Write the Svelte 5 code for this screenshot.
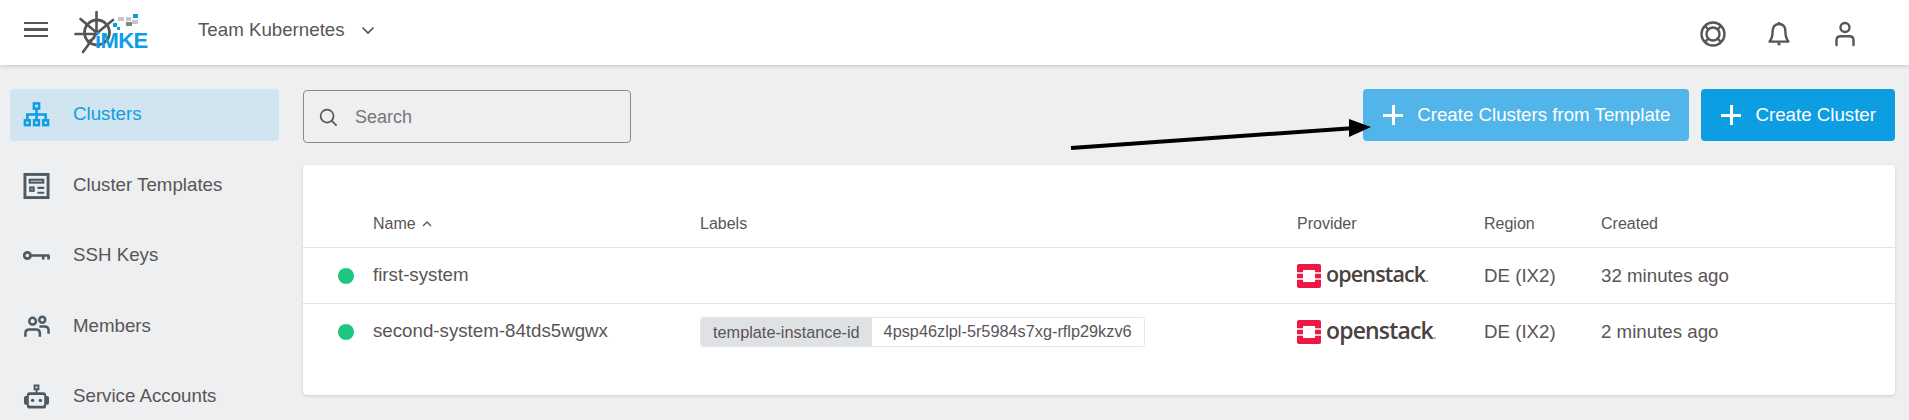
<script>
  const nav = [
    { id: 'clusters', label: 'Clusters', active: true },
    { id: 'templates', label: 'Cluster Templates' },
    { id: 'keys', label: 'SSH Keys' },
    { id: 'members', label: 'Members' },
    { id: 'accounts', label: 'Service Accounts' },
  ];
  const rows = [
    { name: 'first-system', region: 'DE (IX2)', created: '32 minutes ago', big: false },
    { name: 'second-system-84tds5wgwx', label: ['template-instance-id', '4psp46zlpl-5r5984s7xg-rflp29kzv6'], region: 'DE (IX2)', created: '2 minutes ago', big: true },
  ];
</script>

<div class="page">
  <header class="top">
    <button class="burger" aria-label="Menu"><span></span><span></span><span></span></button>
    <div class="logo">
      <svg width="74" height="44" viewBox="0 0 74 44" fill="none" stroke="#555" stroke-width="2.6" stroke-linecap="round">
        <circle cx="23" cy="22.500" r="12.500" stroke-width="2.800" />
        <path d="M22.500 2v20M1.500 24H23M6.500 9L23 23M39 10L23 23M23 23L9 42M14 32l6-4" />
        <rect x="39" y="13" width="4" height="4" fill="#0d9de3" stroke="none" />
        <rect x="44" y="7" width="6" height="4" fill="#c4c8cb" stroke="none" />
        <rect x="52" y="12" width="6" height="4" fill="#7f8487" stroke="none" />
        <rect x="52" y="7" width="5" height="4" fill="#c4c8cb" stroke="none" />
        <rect x="59" y="4" width="5" height="4" fill="#0d9de3" stroke="none" />
        <rect x="58" y="10" width="6" height="4" fill="#c4c8cb" stroke="none" />
        <rect x="43" y="17" width="3" height="3" fill="#0d9de3" stroke="none" />
      </svg>
      <span class="imke">iMKE</span>
    </div>
    <div class="team">
      <span>Team Kubernetes</span>
      <svg width="14" height="14" viewBox="0 0 14 14" fill="none" stroke="#5a5456" stroke-width="1.700"><path d="M1.500 4.500L7 10l5.500-5.500" /></svg>
    </div>
    <div class="actions">
      <svg width="28" height="28" viewBox="0 0 28 28" fill="none" stroke="#5a5456" stroke-width="2.400">
        <circle cx="14" cy="14" r="11.500" /><circle cx="14" cy="14" r="6.500" />
        <path d="M6 6l3.600 3.600M22 6l-3.600 3.600M6 22l3.600-3.600M22 22l-3.600-3.600" />
      </svg>
      <svg width="28" height="28" viewBox="0 0 28 28" fill="none" stroke="#5a5456" stroke-width="2.400" stroke-linejoin="round">
        <path d="M14 4c-4.600 0-6.400 3.600-6.400 7.600 0 5-1.400 8-3 10h18.800c-1.600-2-3-5-3-10C20.400 7.600 18.600 4 14 4z" />
        <path d="M14 2v2M12.500 24h3" />
      </svg>
      <svg width="28" height="28" viewBox="0 0 28 28" fill="none" stroke="#5a5456" stroke-width="2.400" stroke-linecap="round">
        <circle cx="14" cy="7.500" r="4.500" />
        <path d="M5.500 25v-5c0-2.500 1.500-3.800 4-3.800h9c2.500 0 4 1.300 4 3.800v5" />
      </svg>
    </div>
  </header>

  <div class="body">
    <nav class="side">
      {#each nav as item (item.id)}
        <div class="item" class:active={item.active}>
          <span class="ico">
            {#if item.id === 'clusters'}
              <svg width="28" height="28" viewBox="0 0 28 28" fill="none" stroke="currentColor" stroke-width="2.600">
                <rect x="11.300" y="2" width="5.400" height="5.400" /><rect x="2" y="19.500" width="5" height="5" /><rect x="11.500" y="19.500" width="5" height="5" /><rect x="21" y="19.500" width="5" height="5" />
                <path d="M14 7v12M4.500 19v-5.500h19V19" />
              </svg>
            {:else if item.id === 'templates'}
              <svg width="28" height="28" viewBox="0 0 28 28" fill="none" stroke="currentColor" stroke-width="3">
                <rect x="2" y="2" width="24" height="24" />
                <rect x="7" y="7.500" width="14" height="3" stroke-width="2.200" /><rect x="7.500" y="15.500" width="3.500" height="3.500" stroke-width="2.200" />
                <path d="M15 16h7M15 21h7" stroke-width="2.200" />
              </svg>
            {:else if item.id === 'keys'}
              <svg width="28" height="28" viewBox="0 0 28 28" fill="none" stroke="currentColor" stroke-width="2.800">
                <circle cx="4.500" cy="13.500" r="3.300" /><path d="M8 13.500h19.500M21 13.500v4M26.500 13.500v4" />
              </svg>
            {:else if item.id === 'members'}
              <svg width="28" height="28" viewBox="0 0 28 28" fill="none" stroke="currentColor" stroke-width="2.600">
                <circle cx="10" cy="8" r="3.500" /><circle cx="20" cy="6.500" r="3.100" />
                <path d="M2.500 24v-3.500c0-2.500 1.500-4 4-4h7c2.500 0 4 1.500 4 4V24M17 13.500h5.500c2.500 0 4 1.500 4 4V21" />
              </svg>
            {:else}
              <svg width="28" height="28" viewBox="0 0 28 28" fill="currentColor">
                <path d="M11 1h6v6h-2v2h6a3 3 0 013 3v1h1a2 2 0 012 2v5a2 2 0 01-2 2h-1v1a3 3 0 01-3 3H7a3 3 0 01-3-3v-1H3a2 2 0 01-2-2v-5a2 2 0 012-2h1v-1a3 3 0 013-3h6V7h-2zm2 2v2h2V3z" fill-rule="evenodd" />
                <rect x="6" y="12" width="16" height="11" rx="1.500" fill="#eeeff1" />
                <circle cx="10" cy="17.500" r="1.800" /><circle cx="18" cy="17.500" r="1.800" />
              </svg>
            {/if}
          </span>
          <span class="lbl">{item.label}</span>
        </div>
      {/each}
    </nav>

    <main class="main">
      <div class="bar">
        <label class="search">
          <svg width="19" height="19" viewBox="0 0 20 20" fill="none" stroke="#5a5456" stroke-width="1.800" stroke-linecap="round"><circle cx="8.500" cy="8.500" r="6.800" /><path d="M13.500 13.500L18 18" /></svg>
          <input placeholder="Search" />
        </label>
        <button class="btn light"><span class="plus"></span>Create Clusters from Template</button>
        <button class="btn"><span class="plus"></span>Create Cluster</button>
      </div>

      <section class="card">
        <div class="row head">
          <span></span>
          <span class="sort">Name
            <svg width="12" height="12" viewBox="0 0 12 12" fill="none" stroke="#5a5456" stroke-width="1.400"><path d="M2 8l4-4 4 4" /></svg>
          </span>
          <span>Labels</span><span>Provider</span><span>Region</span><span>Created</span>
        </div>
        {#each rows as r (r.name)}
          <div class="row data">
            <span class="dot"></span>
            <span class="name">{r.name}</span>
            <span>
              {#if r.label}
                <span class="tag"><span class="k">{r.label[0]}</span><span class="v">{r.label[1]}</span></span>
              {/if}
            </span>
            <span class="prov" class:big={r.big}>
              <svg width="24" height="24" viewBox="0 0 24 24">
                <rect width="24" height="24" rx="2" fill="#ed1944" />
                <rect x="6" y="6" width="12" height="12" fill="#fff" />
                <path d="M0 9h6M0 15h6M18 9h6M18 15h6" stroke="#fff" stroke-width="1.500" />
              </svg>
              <span class="word">openstack<small>.</small></span>
            </span>
            <span>{r.region}</span>
            <span>{r.created}</span>
          </div>
        {/each}
      </section>
    </main>
  </div>

  <svg class="arrow" width="320" height="40" viewBox="0 0 320 40">
    <path d="M1 30L285 10" stroke="#000" stroke-width="4" />
    <path d="M301 9L279 1v18z" fill="#000" />
  </svg>
</div>

<style>
  :global(body) { margin: 0; background: #eeeff1; }
  .page { position: relative; width: 1909px; height: 420px; overflow: hidden; font-family: "Liberation Sans", Arial, sans-serif; color: #5a5456; font-size: 18.720px; }

  .top { position: relative; height: 65px; background: #fff; display: flex; align-items: center; box-shadow: 0 1px 4px rgba(0,0,0,.18); }
  .burger { width: 24px; margin: 0 0 6px 24px; padding: 0; border: 0; background: none; display: flex; flex-direction: column; gap: 4px; }
  .burger span { display: block; height: 2.500px; background: #5a5456; }
  .logo { position: relative; margin-left: 26px; width: 74px; height: 44px; align-self: flex-start; margin-top: 10px; }
  .logo svg { display: block; }
  .imke { position: absolute; left: 21px; top: 18px; font-size: 22px; font-weight: 700; color: #0d9de3; letter-spacing: -.6px; }
  .team { margin-left: 50px; margin-bottom: 6px; display: flex; align-items: center; gap: 16px; }
  .actions { margin-left: auto; margin-right: 50px; margin-top: 3px; display: flex; gap: 38px; }

  .body { display: flex; }
  .side { flex: none; padding: 24px 0 0 10px; box-sizing: border-box; width: 289px; }
  .item { height: 52px; margin-bottom: 18.500px; margin-right: 10px; padding-left: 13px; display: flex; align-items: center; gap: 23px; border-radius: 4px; }
  .item.active { background: #d0e5ef; color: #0d9de3; }
  .ico { display: flex; color: #4c5a64; width: 27px; }
  .active .ico { color: #0d9de3; }
  .lbl { margin-bottom: 2px; }

  .main { flex: 1; padding: 24px 14px 0 14px; }
  .bar { display: flex; align-items: flex-start; gap: 12px; height: 52px; }
  .search { width: 328px; height: 53px; margin-top: 1px; padding-top: 2px; box-sizing: border-box; border: 1px solid #8b8b8b; border-radius: 4px; display: flex; align-items: center; gap: 15px; padding-left: 15px; margin-right: auto; font-size: 18px; }
  .search input { border: 0; background: none; outline: 0; font: inherit; width: 240px; color: inherit; }
  .search input::placeholder { color: #757575; }
  .btn { height: 52px; border: 0; border-radius: 4px; background: #0d9de3; color: #fff; font: inherit; display: flex; align-items: center; gap: 14px; padding: 0 19px 0 20px; }
  .btn.light { background: #52b5e9; }
  .plus { position: relative; width: 20px; height: 20px; }
  .plus::before, .plus::after { content: ''; position: absolute; background: #fff; }
  .plus::before { left: 9px; top: 0; width: 2.500px; height: 20px; }
  .plus::after { left: 0; top: 9px; width: 20px; height: 2.500px; }

  .card { margin-top: 24px; height: 230px; background: #fff; border-radius: 4px; box-shadow: 0 1px 3px rgba(0,0,0,.14); padding-top: 35px; box-sizing: border-box; }
  .row { display: grid; grid-template-columns: 70px 327px 597px 187px 117px 1fr; align-items: center; }
  .head { height: 47px; font-size: 16px; border-bottom: 1px solid #e2e2e2; }
  .sort { display: flex; align-items: center; gap: 5px; }
  .data { height: 55px; border-bottom: 1px solid #e2e2e2; }
  .data:last-child { border-bottom: 0; }
  .name { margin-bottom: 1px; }
  .dot { width: 16px; height: 16px; border-radius: 50%; background: #1ec781; margin-left: 35px; }
  .tag { display: inline-flex; height: 28px; align-items: center; border: 1px solid #e3e5e7; border-radius: 3px; font-size: 16.300px; background: #fff; overflow: hidden; }
  .k { background: #dfe2e5; padding: 0 12px; line-height: 28px; }
  .v { padding: 0 12px; }
  .prov { display: flex; align-items: center; gap: 5px; }
  .word { font-family: "Open Sans", sans-serif; font-weight: 600; font-size: 21.500px; color: #4a4240; letter-spacing: -.85px; margin-top: -4px; }
  .word small { font-size: 14px; color: #999; }
  .big .word { font-size: 23px; }
  .arrow { position: absolute; left: 1070px; top: 118px; }
</style>
